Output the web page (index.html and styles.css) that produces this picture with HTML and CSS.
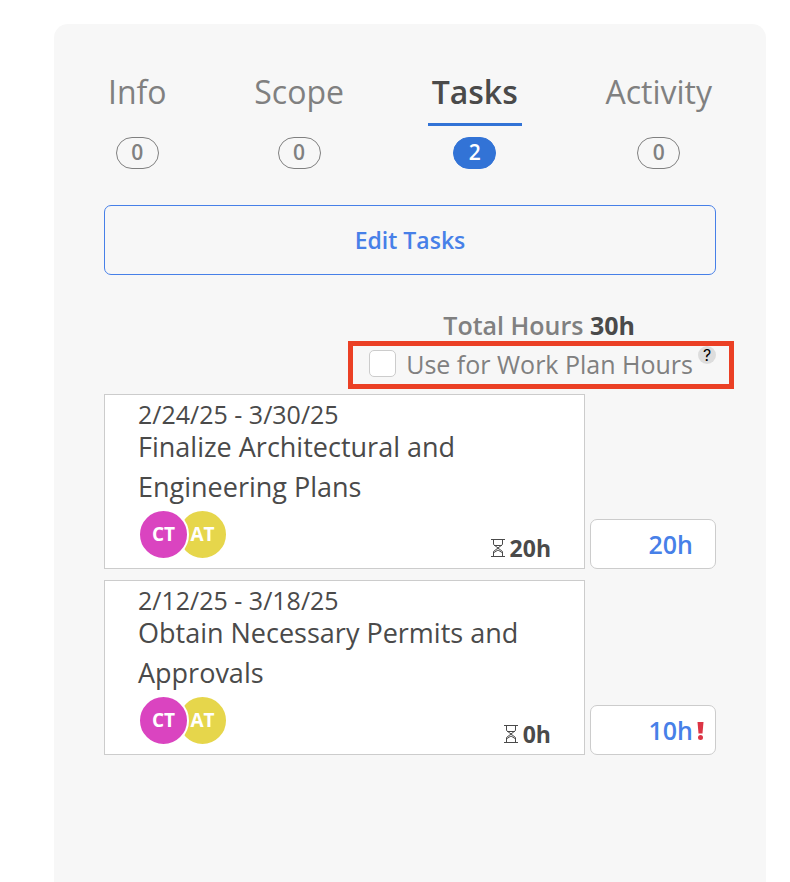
FILE: index.html
```html
<!DOCTYPE html>
<html lang="en">
<head>
    <meta charset="UTF-8">
    <meta name="viewport" content="width=device-width, initial-scale=1.0">
    <title>Tasks</title>
    <link rel="stylesheet" href="styles.css">
</head>
<body>
    <main class="panel">
        <nav class="tabs">
            <a href="#" class="tab">
                <span class="tab-name">Info</span>
                <span class="tab-count">0</span>
            </a>
            <a href="#" class="tab">
                <span class="tab-name">Scope</span>
                <span class="tab-count">0</span>
            </a>
            <a href="#" class="tab active">
                <span class="tab-name">Tasks</span>
                <span class="tab-count">2</span>
            </a>
            <a href="#" class="tab">
                <span class="tab-name">Activity</span>
                <span class="tab-count">0</span>
            </a>
        </nav>

        <button type="button" class="edit-btn">Edit Tasks</button>

        <div class="summary">
            <p class="total">Total Hours <strong>30h</strong></p>
            <div class="work-plan">
                <input type="checkbox" id="workPlan" class="check">
                <label for="workPlan">Use for Work Plan Hours</label>
                <button type="button" class="help">?</button>
            </div>
        </div>

        <div class="task-row">
            <article class="task">
                <p class="task-dates">2/24/25 - 3/30/25</p>
                <h2 class="task-title">Finalize Architectural and Engineering Plans</h2>
                <div class="task-footer">
                    <div class="avatars">
                        <span class="avatar pink">CT</span>
                        <span class="avatar yellow">AT</span>
                    </div>
                    <span class="task-hours">
                        <svg class="hourglass" viewBox="0 0 14 18" width="14" height="18">
                            <path d="M0 .5h14M0 17.500h14M2.500 1v4.500L7 9l-4.500 3.500V17M11.500 1v4.500L7 9l4.500 3.500V17M3 6.500h8M3 13.500L7 11l4 2.500"/>
                        </svg>
                        20h
                    </span>
                </div>
            </article>
            <div class="hours-field">
                <input type="text" class="hours-input" value="20h" aria-label="Hours">
            </div>
        </div>

        <div class="task-row">
            <article class="task">
                <p class="task-dates">2/12/25 - 3/18/25</p>
                <h2 class="task-title">Obtain Necessary Permits and Approvals</h2>
                <div class="task-footer">
                    <div class="avatars">
                        <span class="avatar pink">CT</span>
                        <span class="avatar yellow">AT</span>
                    </div>
                    <span class="task-hours">
                        <svg class="hourglass" viewBox="0 0 14 18" width="14" height="18">
                            <path d="M0 .5h14M0 17.500h14M2.500 1v4.500L7 9l-4.500 3.500V17M11.500 1v4.500L7 9l4.500 3.500V17M3 6.500h8M3 13.500L7 11l4 2.500"/>
                        </svg>
                        0h
                    </span>
                </div>
            </article>
            <div class="hours-field">
                <input type="text" class="hours-input" value="10h" aria-label="Hours">
                <svg class="alert" viewBox="0 0 7 18" width="7" height="18">
                    <path d="M.5 0h6l-1 11.500h-4z"/>
                    <circle cx="3.500" cy="15.500" r="2.500"/>
                </svg>
            </div>
        </div>
    </main>
</body>
</html>
```

FILE: styles.css
```css
* {
    margin: 0;
    padding: 0;
    box-sizing: border-box;
}

body {
    background-color: #fff;
    color: #4a4a4a;
    font-family: 'Open Sans', sans-serif;
    font-size: 25px;
}

button,
input {
    font-family: inherit;
}

.panel {
    min-height: calc(100vh - 24px);
    margin: 24px 24px 0 54px;
    padding: 44px 50px;
    background-color: #f7f7f7;
    border-radius: 14px 14px 0 0;
}

/* tabs */
.tabs {
    display: flex;
    justify-content: space-between;
    margin-bottom: 36px;
}

.tab {
    display: flex;
    flex-direction: column;
    align-items: center;
    gap: 11px;
    color: #808080;
    text-decoration: none;
}

.tab-name {
    padding: 0 4px 7px;
    border-bottom: 3px solid transparent;
    font-size: 32px;
    line-height: 48px;
}

.tab-count {
    width: 43px;
    height: 32px;
    border: 1px solid #808080;
    border-radius: 16px;
    font-size: 21px;
    font-weight: 600;
    line-height: 29px;
    text-align: center;
}

.tab.active .tab-name {
    color: #4a4a4a;
    font-weight: 600;
    border-color: #3273d6;
}

.tab.active .tab-count {
    background-color: #3273d6;
    border-color: #3273d6;
    color: #fff;
}

.edit-btn {
    display: block;
    width: 100%;
    height: 70px;
    background: none;
    border: 1px solid #4780e8;
    border-radius: 7px;
    color: #4780e8;
    font-size: 23px;
    font-weight: 600;
    cursor: pointer;
}

/* total hours and work plan option */
.summary {
    width: fit-content;
    margin: 34px -18px 5px auto;
}

.total {
    padding-right: 4px;
    color: #808080;
    font-weight: 600;
    line-height: 32px;
    text-align: center;
}

.total strong {
    color: #4a4a4a;
    font-weight: 700;
}

.work-plan {
    display: flex;
    align-items: center;
    height: 48px;
    padding: 0 13px 3px 16px;
    border: 5px solid #eb4025;
    color: #808080;
}

.check {
    appearance: none;
    width: 27px;
    height: 27px;
    margin-right: 10px;
    background-color: #fff;
    border: 1px solid #ccc;
    border-radius: 5px;
}

.check:checked {
    background-color: #3273d6;
}

.help {
    align-self: flex-start;
    width: 18px;
    height: 18px;
    margin-left: 5px;
    background-color: #ddd;
    border: none;
    border-radius: 50%;
    color: #000;
    font-family: Inter, sans-serif;
    font-size: 16px;
    line-height: 18px;
}

/* task cards */
.task-row {
    display: grid;
    grid-template-columns: 1fr 126px;
    align-items: end;
    gap: 5px;
    margin-bottom: 11px;
}

.task {
    padding: 7px 33px 8px;
    background-color: #fff;
    border: 1px solid #ccc;
}

.task-dates {
    line-height: 25px;
}

.task-title {
    margin-bottom: 2px;
    font-size: 27px;
    font-weight: 400;
    line-height: 40px;
}

.task-footer {
    display: flex;
    justify-content: space-between;
    align-items: flex-end;
}

.avatars {
    display: flex;
}

.avatar {
    width: 51px;
    height: 51px;
    border: 2px solid #fff;
    border-radius: 50%;
    color: #fff;
    font-size: 19px;
    font-weight: 700;
    line-height: 47px;
    text-align: center;
}

.avatar.pink {
    position: relative;
    z-index: 1;
    background-color: #da44c0;
}

.avatar.yellow {
    margin-left: -12px;
    background-color: #e6d64b;
}

.task-hours {
    display: flex;
    align-items: center;
    gap: 5px;
    font-size: 23px;
    font-weight: 700;
    line-height: 24px;
}

.hourglass {
    fill: none;
    stroke: #4a4a4a;
    stroke-width: 1;
}

.hours-field {
    position: relative;
}

.hours-input {
    display: block;
    width: 100%;
    height: 50px;
    padding: 0 22px;
    background-color: #fff;
    border: 1px solid #ccc;
    border-radius: 7px;
    color: #4780e8;
    font-size: 25px;
    font-weight: 600;
    text-align: right;
}

.alert {
    position: absolute;
    top: 17px;
    right: 12px;
    fill: #dc3545;
}
```
